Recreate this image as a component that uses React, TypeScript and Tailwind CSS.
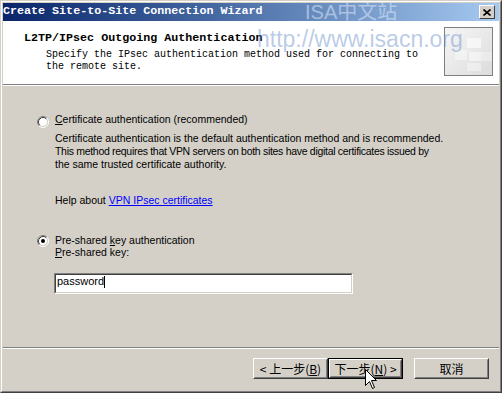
import type { ReactNode } from "react";

function Radio({ checked }: { checked?: boolean }) {
  return (
    <svg width="12" height="12" viewBox="0 0 12 12" className="shrink-0">
      <circle cx="6" cy="6" r="4.5" fill="#ffffff" />
      <path d="M2.11 9.89 A5.5 5.5 0 0 1 9.89 2.11" fill="none" stroke="#808080" strokeWidth="1" />
      <path d="M9.89 2.11 A5.5 5.5 0 0 1 2.11 9.89" fill="none" stroke="#ffffff" strokeWidth="1" />
      <path d="M2.82 9.18 A4.5 4.5 0 0 1 9.18 2.82" fill="none" stroke="#404040" strokeWidth="1" />
      <path d="M9.18 2.82 A4.5 4.5 0 0 1 2.82 9.18" fill="none" stroke="#d4d0c8" strokeWidth="1" />
      {checked && <circle cx="6" cy="6" r="2" fill="#000000" />}
    </svg>
  );
}

function Btn({ children, def }: { children: ReactNode; def?: boolean }) {
  return (
    <div className={`w-[75px] h-[21px] ${def ? "border border-black" : ""}`}>
      <div className="h-full border border-t-white border-l-white border-r-[#404040] border-b-[#404040]">
        <div className="h-full border border-t-[#d4d0c8] border-l-[#d4d0c8] border-r-[#808080] border-b-[#808080] flex items-center justify-center text-[12px] leading-none whitespace-pre font-['Noto_Sans_CJK_SC',sans-serif]">
          {children}
        </div>
      </div>
    </div>
  );
}

export default function App() {
  return (
    <div className="relative w-[502px] h-[393px] overflow-hidden bg-[#d4d0c8] text-black text-[10.5px] font-['Liberation_Sans',Arial,sans-serif]">
      <div className="h-full border border-t-[#d4d0c8] border-l-[#d4d0c8] border-r-[#404040] border-b-[#404040]">
        <div className="h-full flex flex-col border border-t-white border-l-white border-r-[#808080] border-b-[#808080] p-px">
          {/* Title bar */}
          <div className="h-[18px] shrink-0 flex items-center justify-between bg-gradient-to-r from-[#0a246a] to-[#a6caf0]">
            <span className="text-white font-bold text-[11.7px] leading-none font-['Liberation_Mono',monospace]">
              Create Site-to-Site Connection Wizard
            </span>
            <div className="mr-[4px] w-[16px] h-[14px] bg-[#d4d0c8] border border-t-white border-l-white border-r-[#404040] border-b-[#404040] flex items-center justify-center">
              <svg width="8" height="7" viewBox="0 0 8 7">
                <path d="M0.5 0.5 L7.5 6.5 M7.5 0.5 L0.5 6.5" stroke="#000" strokeWidth="1.6" />
              </svg>
            </div>
          </div>

          {/* Header */}
          <div className="h-[63px] shrink-0 bg-white flex justify-between">
            <div className="pt-[10px] pl-[21px] font-['Liberation_Mono',monospace]">
              <div className="font-bold text-[11.7px] leading-[14px]">L2TP/IPsec Outgoing Authentication</div>
              <div className="mt-[4px] pl-[22px] text-[10px] leading-[12px]">
                Specify the IPsec authentication method used for connecting to
                <br />
                the remote site.
              </div>
            </div>
            <div className="mt-[6px] mr-[6px] w-[49px] h-[49px] border border-[#808080]">
              <svg width="47" height="47" viewBox="0 0 47 47">
                <defs>
                  <linearGradient id="g" x1="0" y1="0" x2="1" y2="1">
                    <stop offset="0" stopColor="#f6f6f6" />
                    <stop offset="1" stopColor="#dcdcdc" />
                  </linearGradient>
                </defs>
                <rect width="47" height="47" fill="url(#g)" />
                <rect x="22" y="10" width="14" height="10" fill="#ffffff" opacity="0.6" />
                <rect x="10" y="22" width="12" height="10" fill="#ffffff" opacity="0.4" />
                <rect x="24" y="24" width="12" height="9" fill="#ffffff" opacity="0.5" />
                <rect x="36" y="24" width="11" height="9" fill="#ffffff" opacity="0.3" />
                <rect x="22" y="35" width="14" height="8" fill="#ffffff" opacity="0.4" />
              </svg>
            </div>
          </div>

          <div className="h-px shrink-0 bg-[#808080]" />
          <div className="h-px shrink-0 bg-white" />

          {/* Body */}
          <div className="flex-1 pt-[27px] pl-[34px]">
            <div className="flex items-start gap-[6px] h-[13px] leading-[13px]">
              <div className="mt-[3px]">
                <Radio />
              </div>
              <span>
                <u>C</u>ertificate authentication (recommended)
              </span>
            </div>
            <div className="mt-[6px] ml-[18px] leading-[13px]">
              <div>Certificate authentication is the default authentication method and is recommended.</div>
              <div className="tracking-[-0.3px]">
                This method requires that VPN servers on both sites have digital certificates issued by
              </div>
              <div>the same trusted certificate authority.</div>
            </div>
            <div className="mt-[23px] ml-[18px] leading-[13px]">
              Help about <span className="text-[#0000ff] underline">VPN IPsec certificates</span>
            </div>

            <div className="mt-[27px] flex items-start gap-[6px] h-[13px] leading-[13px]">
              <div className="mt-[1px]">
                <Radio checked />
              </div>
              <span>
                Pre-shared <u>k</u>ey authentication
              </span>
            </div>
            <div className="-mt-px ml-[18px] leading-[13px]">
              <u>P</u>re-shared key:
            </div>
            <div className="mt-[14px] ml-[17px] w-[299px] h-[21px] border border-t-[#808080] border-l-[#808080] border-r-white border-b-white">
              <div className="h-full border border-t-[#404040] border-l-[#404040] border-r-[#d4d0c8] border-b-[#d4d0c8] bg-white pl-px flex items-start">
                <span className="leading-[13px] text-[11px]">password</span>
                <span className="mt-[1px] w-px h-[12px] bg-black" />
              </div>
            </div>
          </div>

          <div className="h-px shrink-0 bg-[#808080]" />
          <div className="h-px shrink-0 bg-white" />

          {/* Footer */}
          <div className="h-[41px] shrink-0 pt-[9px] pr-[10px] flex justify-end items-start">
            <Btn>
              {"< 上一步("}
              <u>B</u>
              {")"}
            </Btn>
            <Btn def>
              {"下一步("}
              <u>N</u>
              {") >"}
            </Btn>
            <div className="ml-[11px]">
              <Btn>取消</Btn>
            </div>
          </div>
        </div>
      </div>

      {/* Watermark */}
      <span className="absolute left-[305px] top-[1px] text-[20px] leading-[22px] text-[rgba(225,235,250,0.55)] font-['Liberation_Sans','Noto_Sans_CJK_SC',sans-serif]">
        ISA中文站
      </span>
      <span className="absolute left-[257px] top-[26px] text-[23px] leading-[26px] text-[rgba(100,140,200,0.45)] font-['Liberation_Sans',sans-serif]">
        http://www.isacn.org
      </span>

      {/* Cursor */}
      <svg className="absolute left-[365px] top-[369px]" width="13" height="21" viewBox="0 0 13 21">
        <path d="M0.5 0.5 L0.5 16.5 L4.5 12.5 L7.5 19.5 L9.5 18.5 L6.5 11.5 L11.5 11.5 Z" fill="#ffffff" stroke="#000000" strokeWidth="1" />
      </svg>
    </div>
  );
}
